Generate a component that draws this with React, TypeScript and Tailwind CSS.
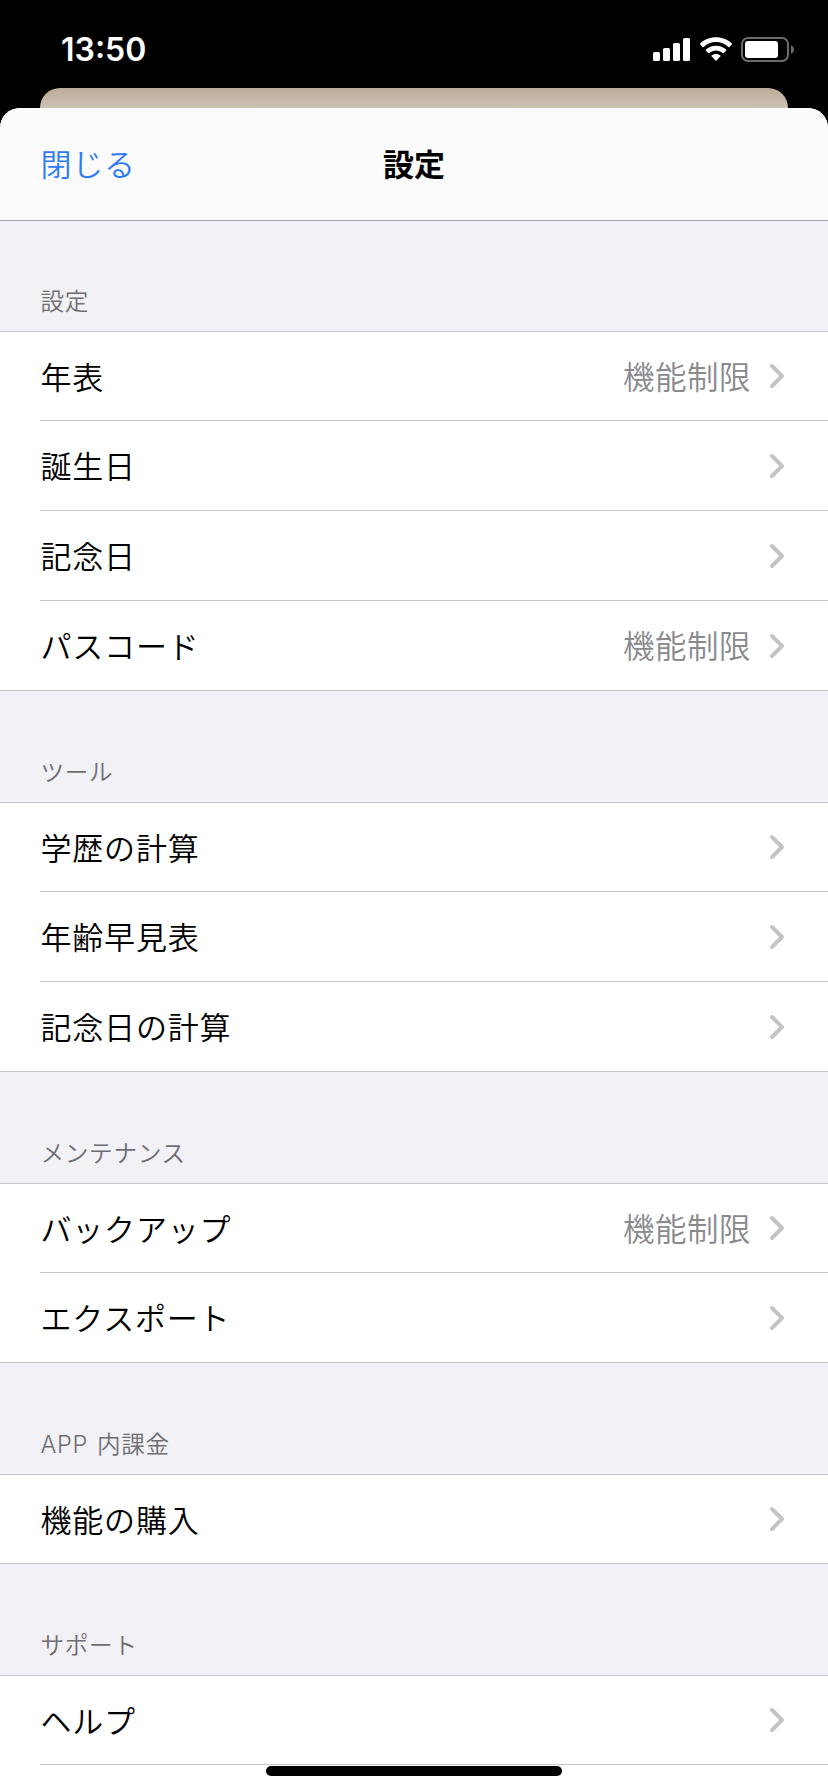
const sections = [
  {
    title: '設定',
    rows: [
      { label: '年表', value: '機能制限' },
      { label: '誕生日' },
      { label: '記念日' },
      { label: 'パスコード', value: '機能制限' }
    ]
  },
  {
    title: 'ツール',
    rows: [{ label: '学歴の計算' }, { label: '年齢早見表' }, { label: '記念日の計算' }]
  },
  {
    title: 'メンテナンス',
    rows: [{ label: 'バックアップ', value: '機能制限' }, { label: 'エクスポート' }]
  },
  {
    title: 'APP 内課金',
    rows: [{ label: '機能の購入' }]
  },
  {
    title: 'サポート',
    rows: [{ label: 'ヘルプ' }, { label: '' }]
  }
]

type Row = { label: string; value?: string }

function StatusBar() {
  return (
    <div className="h-[88px] pl-[60px] pr-[33px] pt-[37px] flex items-start justify-between text-white">
      <span className="text-[32px] leading-[26px] font-semibold pl-px">13:50</span>
      <div className="flex items-start">
        <svg className="w-[37px] h-[25px]" viewBox="0 0 37 25" fill="currentColor">
          <rect x="0" y="15" width="7" height="9" rx="1.6" />
          <rect x="10" y="11" width="7" height="13" rx="1.6" />
          <rect x="20" y="6" width="7" height="18" rx="1.6" />
          <rect x="30" y="1" width="7" height="23" rx="1.6" />
        </svg>
        <svg className="w-8 h-[25px] ml-[9.5px] mr-[9.5px]" viewBox="0 0 32 25" fill="currentColor">
          <path d="M16 0.2C22.2 0.2 27.8 2.5 31.8 6.4C32.1 6.7 32.1 7.2 31.8 7.5L29.4 9.9C29.1 10.2 28.6 10.2 28.3 9.9C25 6.8 20.7 5.1 16 5.1C11.3 5.1 7 6.8 3.7 9.9C3.4 10.2 2.9 10.2 2.6 9.9L0.2 7.5C-0.1 7.2 -0.1 6.7 0.2 6.4C4.2 2.5 9.8 0.2 16 0.2Z" />
          <path d="M16 8.7C19.9 8.7 23.4 10.2 26.1 12.6C26.4 12.9 26.4 13.4 26.1 13.7L23.7 16.1C23.4 16.4 22.9 16.4 22.6 16.1C20.8 14.5 18.5 13.6 16 13.6C13.5 13.6 11.2 14.5 9.4 16.1C9.1 16.4 8.6 16.4 8.3 16.1L5.9 13.7C5.6 13.4 5.6 12.9 5.9 12.6C8.6 10.2 12.1 8.7 16 8.7Z" />
          <path d="M16 17C17.7 17 19.2 17.6 20.4 18.6C20.7 18.9 20.7 19.3 20.4 19.6L16.5 23.6C16.2 23.9 15.8 23.9 15.5 23.6L11.6 19.6C11.3 19.3 11.3 18.9 11.6 18.6C12.8 17.6 14.3 17 16 17Z" />
        </svg>
        <svg className="w-[54px] h-[25px]" viewBox="0 0 54 25" fill="none">
          <rect x="1" y="1" width="46" height="23" rx="6" stroke="#6b6b6b" strokeWidth="2" />
          <rect x="4" y="4" width="33" height="17" rx="3" fill="#fff" />
          <path d="M50 8.2C52 9 53 10.7 53 12.5S52 16 50 16.8Z" fill="#6b6b6b" />
        </svg>
      </div>
    </div>
  )
}

function SettingRow({ row, first, last }: { row: Row; first: boolean; last: boolean }) {
  return (
    <li className={last ? '' : 'pl-10'}>
      <div
        className={`flex items-center justify-between border-b border-[#c6c6c8] pr-[43px] ${first ? 'h-[89px]' : 'h-[90px]'} ${last ? 'pl-10' : ''}`}
      >
        <span className="text-[31px] tracking-[0.8px] leading-10 font-[350] text-black pt-[3px] pl-[0.5px]">{row.label}</span>
        <div className="flex items-center">
          {row.value && <span className="text-[31.5px] tracking-[0.5px] leading-10 font-[350] text-[#8a8a8e] pt-[3px] mr-[18px]">{row.value}</span>}
          {row.label && (
            <svg className="w-4 h-[26px]" viewBox="0 0 16 26" fill="none" stroke="#c4c4c6" strokeWidth="4" strokeLinecap="round" strokeLinejoin="round">
              <path d="M3 3L13 13L3 23" />
            </svg>
          )}
        </div>
      </div>
    </li>
  )
}

export default function App() {
  return (
    <div lang="ja" className="relative w-[828px] h-[1792px] overflow-hidden bg-black font-['Inter','Noto_Sans_CJK_JP',sans-serif]">
      <StatusBar />

      {/* Page behind the sheet */}
      <div className="mx-10 h-5 rounded-t-[20px] bg-linear-to-b from-[#bcab98] to-[#cec2b4]" />
      <div className="h-[1684px] overflow-hidden rounded-t-[20px] bg-[#f2f1f6]">
        <header className="h-[113px] px-10 grid grid-cols-3 items-center bg-[#fbfbfc] border-b border-[#a9a9ad]">
          <button className="text-left text-[31px] tracking-[0.7px] leading-10 font-[350] text-[#2f7cf6] pt-px pl-[0.5px]">閉じる</button>
          <h1 className="text-center text-[31px] leading-10 font-bold text-black pt-0.5">設定</h1>
        </header>

        {sections.map((section, index) => (
          <section key={section.title}>
            <h2
              className={`flex items-end pl-[40.5px] pb-[11px] text-[23.6px] tracking-[0.7px] [word-spacing:1.5px] leading-9 font-[350] text-[#6d6d72] ${index === 0 ? 'h-[110px]' : 'h-[111px]'}`}
            >
              {section.title}
            </h2>
            <ul className="bg-white border-t border-[#c6c6c8]">
              {section.rows.map((row, i) => (
                <SettingRow key={i} row={row} first={i === 0} last={i === section.rows.length - 1} />
              ))}
            </ul>
          </section>
        ))}
      </div>

      {/* Home indicator */}
      <div className="absolute left-[266px] top-[1766px] w-[296px] h-2.5 rounded-full bg-black" />
    </div>
  )
}
